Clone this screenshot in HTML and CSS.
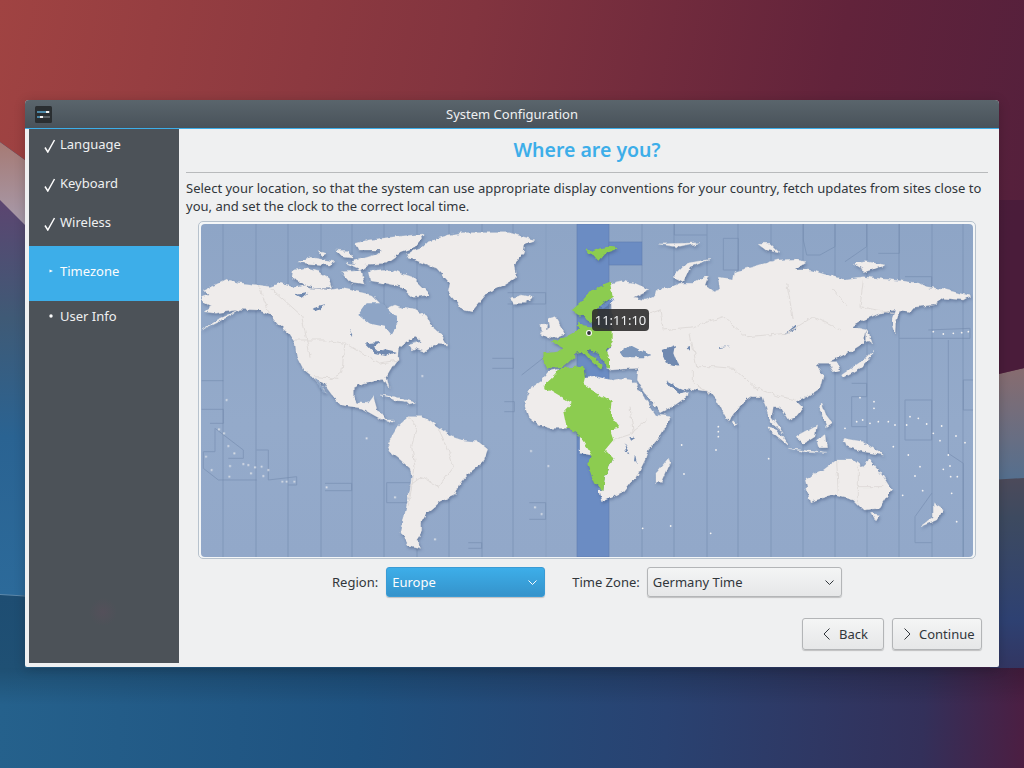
FILE: index.html
```html
<!DOCTYPE html>
<html lang="en">
<head>
    <meta charset="utf-8">
    <title>System Configuration</title>
    <link rel="stylesheet" href="styles.css">
</head>
<body>
    <svg class="wallpaper" viewBox="0 0 1024 768" aria-hidden="true">
        <defs>
            <linearGradient id="wpRed" x1="0" y1="0" x2="1024" y2="200" gradientUnits="userSpaceOnUse">
                <stop offset="0" stop-color="#a04342"/>
                <stop offset="0.45" stop-color="#82343f"/>
                <stop offset="0.8" stop-color="#62233b"/>
                <stop offset="1" stop-color="#55203c"/>
            </linearGradient>
            <linearGradient id="wpPaleL" x1="0" y1="142" x2="0" y2="225" gradientUnits="userSpaceOnUse">
                <stop offset="0" stop-color="#a67a74"/>
                <stop offset="1" stop-color="#a79bac"/>
            </linearGradient>
            <linearGradient id="wpPaleR" x1="0" y1="372" x2="0" y2="478" gradientUnits="userSpaceOnUse">
                <stop offset="0" stop-color="#866c70"/>
                <stop offset="1" stop-color="#556f8e"/>
            </linearGradient>
            <linearGradient id="wpBlueL" x1="0" y1="200" x2="0" y2="595" gradientUnits="userSpaceOnUse">
                <stop offset="0" stop-color="#5c4570"/>
                <stop offset="0.3" stop-color="#3f5a76"/>
                <stop offset="0.6" stop-color="#2a6392"/>
                <stop offset="1" stop-color="#2c6a9a"/>
            </linearGradient>
            <linearGradient id="wpBlueR" x1="0" y1="478" x2="0" y2="680" gradientUnits="userSpaceOnUse">
                <stop offset="0" stop-color="#4c4a5a"/>
                <stop offset="0.2" stop-color="#3d4a60"/>
                <stop offset="0.7" stop-color="#2e4172"/>
                <stop offset="1" stop-color="#33335e"/>
            </linearGradient>
            <linearGradient id="wpBottom" x1="0" y1="710" x2="1024" y2="760" gradientUnits="userSpaceOnUse">
                <stop offset="0" stop-color="#25618c"/>
                <stop offset="0.35" stop-color="#1f5280"/>
                <stop offset="0.65" stop-color="#294271"/>
                <stop offset="0.9" stop-color="#33305a"/>
                <stop offset="1" stop-color="#4c1e42"/>
            </linearGradient>
            <linearGradient id="wpShade" x1="0" y1="595" x2="0" y2="668" gradientUnits="userSpaceOnUse">
                <stop offset="0" stop-color="#1e4d72"/>
                <stop offset="1" stop-color="#1f5074"/>
            </linearGradient>
            <linearGradient id="wpDim" x1="0" y1="668" x2="0" y2="705" gradientUnits="userSpaceOnUse">
                <stop offset="0" stop-color="#000" stop-opacity="0.18"/>
                <stop offset="1" stop-color="#000" stop-opacity="0"/>
            </linearGradient>
        </defs>
        <rect width="1024" height="768" fill="url(#wpBottom)"/>
        <rect y="668" width="1024" height="37" fill="url(#wpDim)"/>
        <rect x="990" y="470" width="34" height="198" fill="url(#wpBlueR)"/>
        <rect y="190" width="40" height="405" fill="url(#wpBlueL)"/>
        <rect y="595" width="25" height="73" fill="url(#wpShade)"/>
        <path d="M0 594.500 25 596" stroke="#5d88aa" stroke-width="1"/>
        <polygon points="0,142 25,160 25,225 0,200" fill="url(#wpPaleL)"/>
        <polygon points="990,374 1024,368 1024,478 990,480" fill="url(#wpPaleR)"/>
        <polygon points="0,0 1024,0 1024,368 999,374 25,160 0,142" fill="url(#wpRed)"/>
        <polygon points="990,200 1024,200 1024,368 990,376" fill="#421b38" opacity="0.6"/>
    </svg>

    <div class="window">
        <div class="titlebar">
            <svg class="app-icon" viewBox="0 0 17 17" aria-hidden="true">
                <rect width="17" height="17" rx="1.5" fill="#2a2e31"/>
                <path d="M2 6h13M2 11h13" stroke="#8a9298" stroke-width="1"/>
                <path d="M2 6h10M2 11h4" stroke="#3daee9" stroke-width="1"/>
                <rect x="11" y="5" width="3" height="2" fill="#eff0f1"/>
                <rect x="5" y="10" width="3" height="2" fill="#eff0f1"/>
            </svg>
            <span class="window-title">System Configuration</span>
        </div>
        <div class="window-body">
            <div class="sidebar">
                <div class="step">
                    <svg class="step-icon step-check" viewBox="0 0 12 14"><path d="M1 8.500 3.800 13 10.500 1" fill="none" stroke="#fcfcfc" stroke-width="1.500"/></svg>
                    <span>Language</span>
                </div>
                <div class="step">
                    <svg class="step-icon step-check" viewBox="0 0 12 14"><path d="M1 8.500 3.800 13 10.500 1" fill="none" stroke="#fcfcfc" stroke-width="1.500"/></svg>
                    <span>Keyboard</span>
                </div>
                <div class="step">
                    <svg class="step-icon step-check" viewBox="0 0 12 14"><path d="M1 8.500 3.800 13 10.500 1" fill="none" stroke="#fcfcfc" stroke-width="1.500"/></svg>
                    <span>Wireless</span>
                </div>
                <div class="step step-active">
                    <svg class="step-icon" viewBox="0 0 12 14"><path d="M5.500 5.500 9 7 5.500 8.500Z" fill="#fcfcfc"/></svg>
                    <span>Timezone</span>
                </div>
                <div class="step">
                    <svg class="step-icon" viewBox="0 0 12 14"><circle cx="7" cy="7" r="1.700" fill="#fcfcfc"/></svg>
                    <span>User Info</span>
                </div>
            </div>

            <div class="content">
                <h1 class="heading">Where are you?</h1>
                <p class="intro">Select your location, so that the system can use appropriate display conventions for your country, fetch updates from sites close to you, and set the clock to the correct local time.</p>

                <div class="map-frame">
                    <svg class="map" viewBox="201 224 772 333" aria-hidden="true">
                        <defs>
                            <linearGradient id="sea" x1="0" y1="0" x2="0" y2="1">
                                <stop offset="0" stop-color="#8ea5c6"/>
                                <stop offset="0.6" stop-color="#94aaca"/>
                                <stop offset="1" stop-color="#92a8c9"/>
                            </linearGradient>
                            <!-- roughens the hand traced coastlines and adds their soft shadow -->
                            <filter id="coast" filterUnits="userSpaceOnUse" x="190" y="215" width="800" height="350" color-interpolation-filters="sRGB">
                                <feTurbulence type="fractalNoise" baseFrequency="0.16" numOctaves="2" seed="7" result="noise"/>
                                <feDisplacementMap in="SourceGraphic" in2="noise" scale="5" xChannelSelector="R" yChannelSelector="G" result="rough"/>
                                <feGaussianBlur in="rough" stdDeviation="1.500" result="blur"/>
                                <feOffset in="blur" dx="1" dy="2" result="moved"/>
                                <feFlood flood-color="#3c5078" flood-opacity="0.45"/>
                                <feComposite in2="moved" operator="in" result="shadow"/>
                                <feMerge>
                                    <feMergeNode in="shadow"/>
                                    <feMergeNode in="rough"/>
                                </feMerge>
                            </filter>
                        </defs>
                        <rect x="201" y="224" width="772" height="333" fill="url(#sea)"/>

                        <!-- timezone lines -->
                        <path class="tz" d="M223 224V557M256 224V557M288 224V557M321 224V557M352 224V557M384 224V557M417 224V557M449 224V557M482 224V557M513 224V557M642 224V242M642 265V557M674 224V557M707 224V557M738 224V557M771 224V557M803 224V557M835 224V557M867 224V557M899 224V557M932 224V557M963 224V557"/>
                        <path class="tz tz-soft" d="M546 224V557"/>
                        <g transform="translate(195 220) scale(.33333)">
                            <path class="tz" d="M20 482H85M20 568H85V610H45M60 625 145 690V715H100M25 695H60V625M25 695V745L70 780H185M185 690H220V780L305 770V795H280M390 790H470V812H390M575 788H645M575 788V848H640M820 968H860V985H820M1003 848H1052V898H1003M445 205V275H390V360H450M892 415H955V445H892M938 218H1052V252H938M980 465 1050 410M928 545H958V575H928"/>
                        </g>
                        <g transform="translate(580 220) scale(.33333)">
                            <path class="tz" d="M283 12V45H380M430 55H475V150H430ZM670 12V60L680 105H720L765 80V12M795 125 860 80V12M895 100H958V12M975 170H1055V205M1045 330 1170 325V355H958M1150 480H1180M1150 480V570H1180M975 540H1055V660H975ZM1105 360V700L1150 730V1010M1005 890 1055 820M1005 890V968H1055M815 490H860V530H815V620H860"/>
                        </g>

                        <!-- selected zone -->
                        <rect x="577" y="224" width="32" height="333" fill="#6b8cc3" stroke="#5f7cae" stroke-width="0.600"/>
                        <rect x="609" y="242" width="33" height="23" fill="#6b8cc3" stroke="#5f7cae" stroke-width="0.600"/>

                        <g filter="url(#coast)">
                            <g class="land">
                                <g transform="translate(195 220) scale(.33333)">
                                    <path d="M20 232 40 225 28 210 60 195 95 178 130 188 190 195 225 200 258 190 298 205 330 195 345 205 400 210 440 205 490 215 530 225 545 240 560 255 555 275 600 255 625 265 660 270 695 290 710 320 740 345 758 375 720 372 690 395 660 385 650 390 640 375 680 365 665 352 640 360 610 385 608 420 590 445 575 470 582 505 565 478 530 485 500 490 475 505 475 530 485 548 520 550 535 530 545 565 570 600 600 600 580 608 545 590 500 565 440 555 415 530 385 490 365 475 395 520 350 470 325 450 305 410 300 370 280 340 250 315 225 285 190 270 135 268 100 290 60 310 20 330 70 298 100 285 130 270 60 280 28 275 50 258 25 245Z"/>
                                    <path d="M295 150 330 145 370 155 400 175 410 205 360 205 320 190 290 175ZM480 70 520 60 600 50 690 42 660 80 620 95 570 130 490 135 470 125 540 105 560 90 490 90ZM310 125 345 112 420 125 400 135 330 130ZM420 90 460 92 475 115 440 110ZM440 155 500 152 510 195 470 190ZM520 155 590 150 650 170 705 225 655 232 620 200 570 190 525 182ZM455 130 520 135 500 150ZM370 95 395 100 380 108Z"/>
                                    <path d="M635 100 680 85 700 65 760 45 800 38 940 38 1020 60 990 72 985 100 960 130 965 170 925 195 880 215 830 275 805 270 760 215 765 190 725 145 665 122 640 115Z"/>
                                    <path d="M945 235 980 225 1015 232 990 250 955 250Z"/>
                                    <path d="M578 675 590 650 608 620 640 590 680 590 700 600 730 622 770 650 800 660 850 665 878 688 865 725 815 765 795 790 780 825 735 845 725 855 695 880 680 905 680 935 665 960 680 985 640 975 618 935 630 880 645 810 650 770 645 745 610 715 590 700Z"/>
                                    <path d="M555 525 600 530 662 549 610 545 575 530ZM630 545 660 550 640 555Z"/>
                                    <path d="M990 560 995 530 1010 500 1040 480 1060 455 1090 448 1135 548 1115 625 1065 625 1030 615 1000 590Z"/>
                                </g>
                                <g transform="translate(580 220) scale(.33333)">
                                    <path d="M90 190 125 182 165 190 210 210 180 225 160 235 195 240 225 225 230 205 265 205 300 190 340 190 365 175 385 168 375 195 400 215 420 210 415 175 460 180 465 155 520 140 590 120 640 118 678 125 640 150 690 150 740 165 790 178 850 170 890 175 960 182 1020 190 1040 200 1100 210 1170 228 1150 240 1090 235 1060 255 1000 262 990 275 960 270 950 300 948 345 935 300 945 270 900 280 850 300 815 320 860 330 850 370 810 395 780 410 750 425 770 425 780 450 760 455 745 430 705 430 730 465 720 505 690 525 650 545 670 565 650 590 625 600 600 560 580 560 575 590 610 640 575 610 545 530 515 530 480 555 445 605 410 540 390 515 325 505 290 520 255 482 295 505 322 515 320 530 285 555 240 578 190 510 172 480 175 445 130 447 95 450 80 445 90 420 75 410 90 380 98 320Z"/>
                                    <path d="M10 475 50 470 90 480 115 475 155 480 165 490 190 530 228 585 275 590 262 610 240 650 205 690 195 720 170 770 150 790 130 815 65 845 55 810 70 810 75 770 100 715 0 700 0 500Z"/>
                                    <path d="M675 775 730 750 770 720 820 720 850 745 865 715 910 770 935 810 900 865 850 870 820 840 760 825 690 845ZM875 880 900 885 888 903ZM1060 850 1090 870 1070 900 1020 920 1060 890ZM228 760 265 715 270 730 245 790 228 790ZM460 600 472 612 462 618ZM645 650 710 615 705 650 670 672ZM558 622 590 630 630 680ZM625 685 740 700 680 697ZM790 655 850 665 910 705 850 695 800 680ZM725 550 740 590 755 610 740 620 720 570ZM710 660 735 645 740 680 715 680ZM280 170 320 130 390 118 330 140 310 185ZM535 70 570 70 600 100 560 90ZM820 130 860 125 915 135 860 155ZM785 465 850 420 880 390 850 440 790 475ZM860 325 875 370 860 360ZM235 72 360 68 300 82Z"/>
                                </g>
                                <g transform="translate(530 270) scale(.33333)">
                                    <path d="M30 190 60 170 55 145 75 140 105 190 70 205 50 200ZM30 165 50 160 48 182 32 184Z"/>
                                </g>
                            </g>

                            <!-- lakes and narrow seas -->
                            <g class="lake" transform="translate(195 220) scale(.33333)">
                                <path d="M490 285 515 250 560 250 600 290 610 310 590 345 570 320 520 310Z" fill="#8ea5c6"/>
                                <path d="M365 475 395 520 385 518 360 480Z" fill="#8ea5c6"/>
                                <path d="M510 370 555 366 535 382 550 395 570 388 605 395 570 408 542 402ZM300 225 340 218 320 236ZM350 265 390 255 365 272ZM465 325 475 345 470 350Z"/>
                            </g>
                            <g class="lake" transform="translate(580 220) scale(.33333)">
                                <path d="M120 395 150 375 180 390 215 405 195 412 130 412Z" fill="#7e98bc"/>
                                <path d="M245 390 285 375 280 400 295 440 265 435ZM615 342 650 312 645 330ZM418 385 455 377 420 382ZM320 385 332 380 330 395ZM148 652 165 650 155 665ZM132 670 148 700 138 695ZM165 705 170 728 162 725ZM255 480 300 505 325 515 300 520 270 500Z"/>
                            </g>

                            <g transform="translate(580 220) scale(.33333)">
                                <path class="green" d="M15 85 35 95 60 85 85 80 120 85 90 95 75 100 55 122 40 105 25 100ZM-22 268 0 250 35 210 90 188 98 230 70 250 55 265 50 295 40 310 20 300 10 285 0 290-10 285ZM-110 400-65 395-50 385-85 365-40 350-20 340 0 325-10 320-5 305 10 315 40 320 98 330 98 365 78 390 90 415 90 445 82 445 72 425 52 400 30 388 22 392 45 418 68 438 62 448 38 428 15 403 5 395-10 398-20 415-50 440-100 445-108 430ZM-110 498-75 465-60 445 10 438 15 475 10 495 95 545 90 580 120 622 90 630 100 660 75 690 100 715 75 770 70 810 42 790 22 735 35 700 0 650-25 630-40 625-50 575-25 548Z"/>
                                <path d="M60 260 95 235 100 245 65 270Z" fill="#6b8cc3"/>
                            </g>

                            <!-- borders -->
                            <g transform="translate(195 220) scale(.33333)">
                                <path class="border" d="M190 195 225 285M225 205 320 290 340 380 345 410M300 360H390L450 370 440 460 400 480M360 470 430 475M450 370 550 430 610 420M640 590 665 620 650 680 660 740 640 860M730 625 760 690 775 740 730 800 680 770 640 800"/>
                            </g>
                            <g transform="translate(580 220) scale(.33333)">
                                <path class="border" d="M100 320 240 270 250 330 340 320 430 290 500 350 620 340 700 290 780 330M330 340 350 440 400 440 460 445 520 500 600 530 650 540M340 450V490L390 520M620 190 640 300M850 180 840 260 940 280M760 210 800 260M770 720 775 825M835 740V850M835 800H910M150 560 160 640 100 660M200 600 150 640"/>
                            </g>
                        </g>

                        <!-- small islands -->
                        <g transform="translate(195 220) scale(.33333)">
                            <path class="dots" d="M72 628h0M87 640h0M100 678h0M118 700h0M33 710h0M50 750h0M105 738h0M103 770h0M145 732h0M160 735h0M180 742h0M200 740h0M220 750h0M168 760h0M205 768h0M262 785h0M275 785h0M298 785h0M395 802h0M682 468h0M1008 693h0M1060 738h0M1020 862h0M1040 882h0M720 958h0M600 832h0M515 655h0M95 540h0"/>
                        </g>
                        <g transform="translate(580 220) scale(.33333)">
                            <path class="dots" d="M415 620h0M415 635h0M415 650h0M408 690h0M305 675h0M312 762h0M188 925h0M272 918h0M392 940h0M566 716h0M840 533h0M882 545h0M882 565h0M830 605h0M848 600h0M870 610h0M895 605h0M925 605h0M945 615h0M980 615h0M990 590h0M1015 595h0M1040 612h0M1085 618h0M1060 640h0M1080 662h0M1128 648h0M1155 668h0M1105 705h0M1090 748h0M1110 738h0M1112 770h0M1132 770h0M1020 740h0M1005 768h0M1115 820h0M968 826h0M1028 812h0M1130 905h0M1060 335h0M1090 342h0M1120 340h0M1145 338h0M1165 335h0M795 625h0M940 680h0M985 705h0"/>
                        </g>

                        <!-- location pin -->
                        <circle cx="589" cy="333" r="3" fill="#fcfcfc"/>
                        <circle cx="589" cy="333" r="1.900" fill="#2f3335"/>
                    </svg>
                    <span class="clock">11:11:10</span>
                </div>

                <div class="pickers">
                    <label class="picker-label">Region:</label>
                    <div class="combo combo-focus">
                        <span>Europe</span>
                        <svg class="combo-arrow" viewBox="0 0 9 5"><path d="M.5 .5 4.500 4.500 8.500 .5" fill="none" stroke="#fcfcfc"/></svg>
                    </div>
                    <label class="picker-label picker-label-zone">Time Zone:</label>
                    <div class="combo combo-zone">
                        <span>Germany Time</span>
                        <svg class="combo-arrow" viewBox="0 0 9 5"><path d="M.5 .5 4.500 4.500 8.500 .5" fill="none" stroke="#31363b"/></svg>
                    </div>
                </div>

                <div class="actions">
                    <button class="btn btn-back">
                        <svg class="btn-icon" viewBox="0 0 7 12"><path d="M6.500 .5 1 6 6.500 11.500" fill="none" stroke="#31363b"/></svg>
                        Back
                    </button>
                    <button class="btn btn-next">
                        <svg class="btn-icon" viewBox="0 0 7 12"><path d="M.5 .5 6 6 .5 11.500" fill="none" stroke="#31363b"/></svg>
                        Continue
                    </button>
                </div>
            </div>
        </div>
    </div>
</body>
</html>
```

FILE: styles.css
```css
html, body {
    margin: 0;
    height: 100%;
    overflow: hidden;
}

body {
    font-family: "Noto Sans", sans-serif;
    font-size: 13px;
    color: #31363b;
    background: #2a4a78;
}

.wallpaper {
    position: absolute;
    left: 0;
    top: 0;
    width: 1024px;
    height: 768px;
}

.window {
    position: absolute;
    left: 25px;
    top: 100px;
    width: 974px;
    height: 567px;
    display: flex;
    flex-direction: column;
    background: #eff0f1;
    border-radius: 4px 4px 2px 2px;
    box-shadow: 0 2px 12px rgba(0, 0, 0, 0.2);
}

.titlebar {
    flex: none;
    height: 28px;
    position: relative;
    display: flex;
    align-items: center;
    justify-content: center;
    background: linear-gradient(to bottom, #5a656c, #49525a);
    border-bottom: 1px solid #3daee9;
    border-radius: 4px 4px 0 0;
}

.app-icon {
    position: absolute;
    left: 10px;
    top: 6px;
    width: 17px;
    height: 17px;
}

.window-title {
    color: #eff0f1;
}

.window-body {
    flex: 1;
    display: flex;
    min-height: 0;
    padding: 0 11px 4px 4px;
}

.sidebar {
    flex: none;
    width: 150px;
    background: radial-gradient(circle at 74px 483px, #54505a 0, #4c5258 14px);
    color: #eff0f1;
}

.step {
    height: 30px;
    margin-bottom: 9px;
    padding-left: 15px;
    display: flex;
    align-items: center;
}

.step-active {
    height: 50px;
    margin-bottom: 0;
    padding-bottom: 5px;
    background: #3daee9;
    color: #fcfcfc;
}

.step-icon {
    width: 12px;
    height: 14px;
    margin-right: 4px;
    flex: none;
}

.step-check {
    margin-top: 3px;
}

.content {
    flex: 1;
    min-width: 0;
    display: flex;
    flex-direction: column;
    padding-left: 7px;
}

.heading {
    margin: 0;
    height: 43px;
    border-bottom: 1px solid #b8babc;
    font-size: 19.500px;
    font-weight: 600;
    line-height: 42px;
    text-align: center;
    color: #3daee9;
}

.intro {
    margin: 6px 0 0;
    line-height: 18px;
}

.map-frame {
    position: relative;
    align-self: flex-start;
    width: 772px;
    height: 333px;
    margin: 6px 0 0 12px;
    padding: 2px 2px 1px;
    border: 1px solid #b7c2cd;
    border-radius: 5px;
    background: #f4f6f7;
}

.map {
    display: block;
    width: 772px;
    height: 333px;
    border-radius: 4px;
}

.tz {
    fill: none;
    stroke: #6f86aa;
    stroke-width: 1;
    vector-effect: non-scaling-stroke;
    opacity: 0.5;
}

.tz-soft {
    opacity: 0.2;
}

.land {
    fill: #efeceb;
    stroke: #efeceb;
    stroke-width: 1;
    stroke-linejoin: round;
}

.lake {
    fill: #7089b0;
}

.green {
    fill: #8ccc50;
}

.border {
    fill: none;
    stroke: #dfdbd9;
    stroke-width: 1;
    vector-effect: non-scaling-stroke;
}

.dots {
    fill: none;
    stroke: #f4f2f1;
    stroke-width: 1.800;
    stroke-linecap: round;
    vector-effect: non-scaling-stroke;
}

.clock {
    position: absolute;
    left: 393px;
    top: 87px;
    width: 57px;
    height: 22px;
    border-radius: 4px;
    background: rgba(45, 45, 45, 0.9);
    color: #eff0f1;
    line-height: 22px;
    text-align: center;
}

.pickers {
    display: flex;
    align-items: center;
    height: 30px;
    margin: 8px 0 0 146px;
}

.picker-label {
    margin-right: 8px;
}

.picker-label-zone {
    margin-left: 27px;
    margin-right: 7px;
}

.combo {
    box-sizing: border-box;
    height: 30px;
    width: 159px;
    display: flex;
    align-items: center;
    justify-content: space-between;
    padding: 0 7px 0 5px;
    border-radius: 3px;
    border: 1px solid #b3b5b7;
    background: linear-gradient(to bottom, #f4f5f5, #e6e7e8);
    box-shadow: 0 1px 1px rgba(0, 0, 0, 0.2);
}

.combo-focus {
    border-color: #3a9bd5;
    background: linear-gradient(to bottom, #3daee9, #3593cb);
    color: #fcfcfc;
}

.combo-zone {
    width: 195px;
}

.combo-arrow {
    width: 9px;
    height: 5px;
}

.actions {
    display: flex;
    justify-content: flex-end;
    gap: 8px;
    margin: 21px 6px 0 0;
}

.btn {
    box-sizing: border-box;
    height: 32px;
    display: flex;
    align-items: center;
    gap: 9px;
    font: inherit;
    color: #31363b;
    border: 1px solid #b3b5b7;
    border-radius: 3px;
    background: linear-gradient(to bottom, #f4f5f5, #e6e7e8);
    box-shadow: 0 1px 1px rgba(0, 0, 0, 0.2);
}

.btn-back {
    width: 82px;
    padding: 0 0 0 20px;
}

.btn-next {
    width: 90px;
    padding: 0 0 0 11px;
    gap: 8px;
}

.btn-icon {
    width: 7px;
    height: 12px;
    flex: none;
}
```
